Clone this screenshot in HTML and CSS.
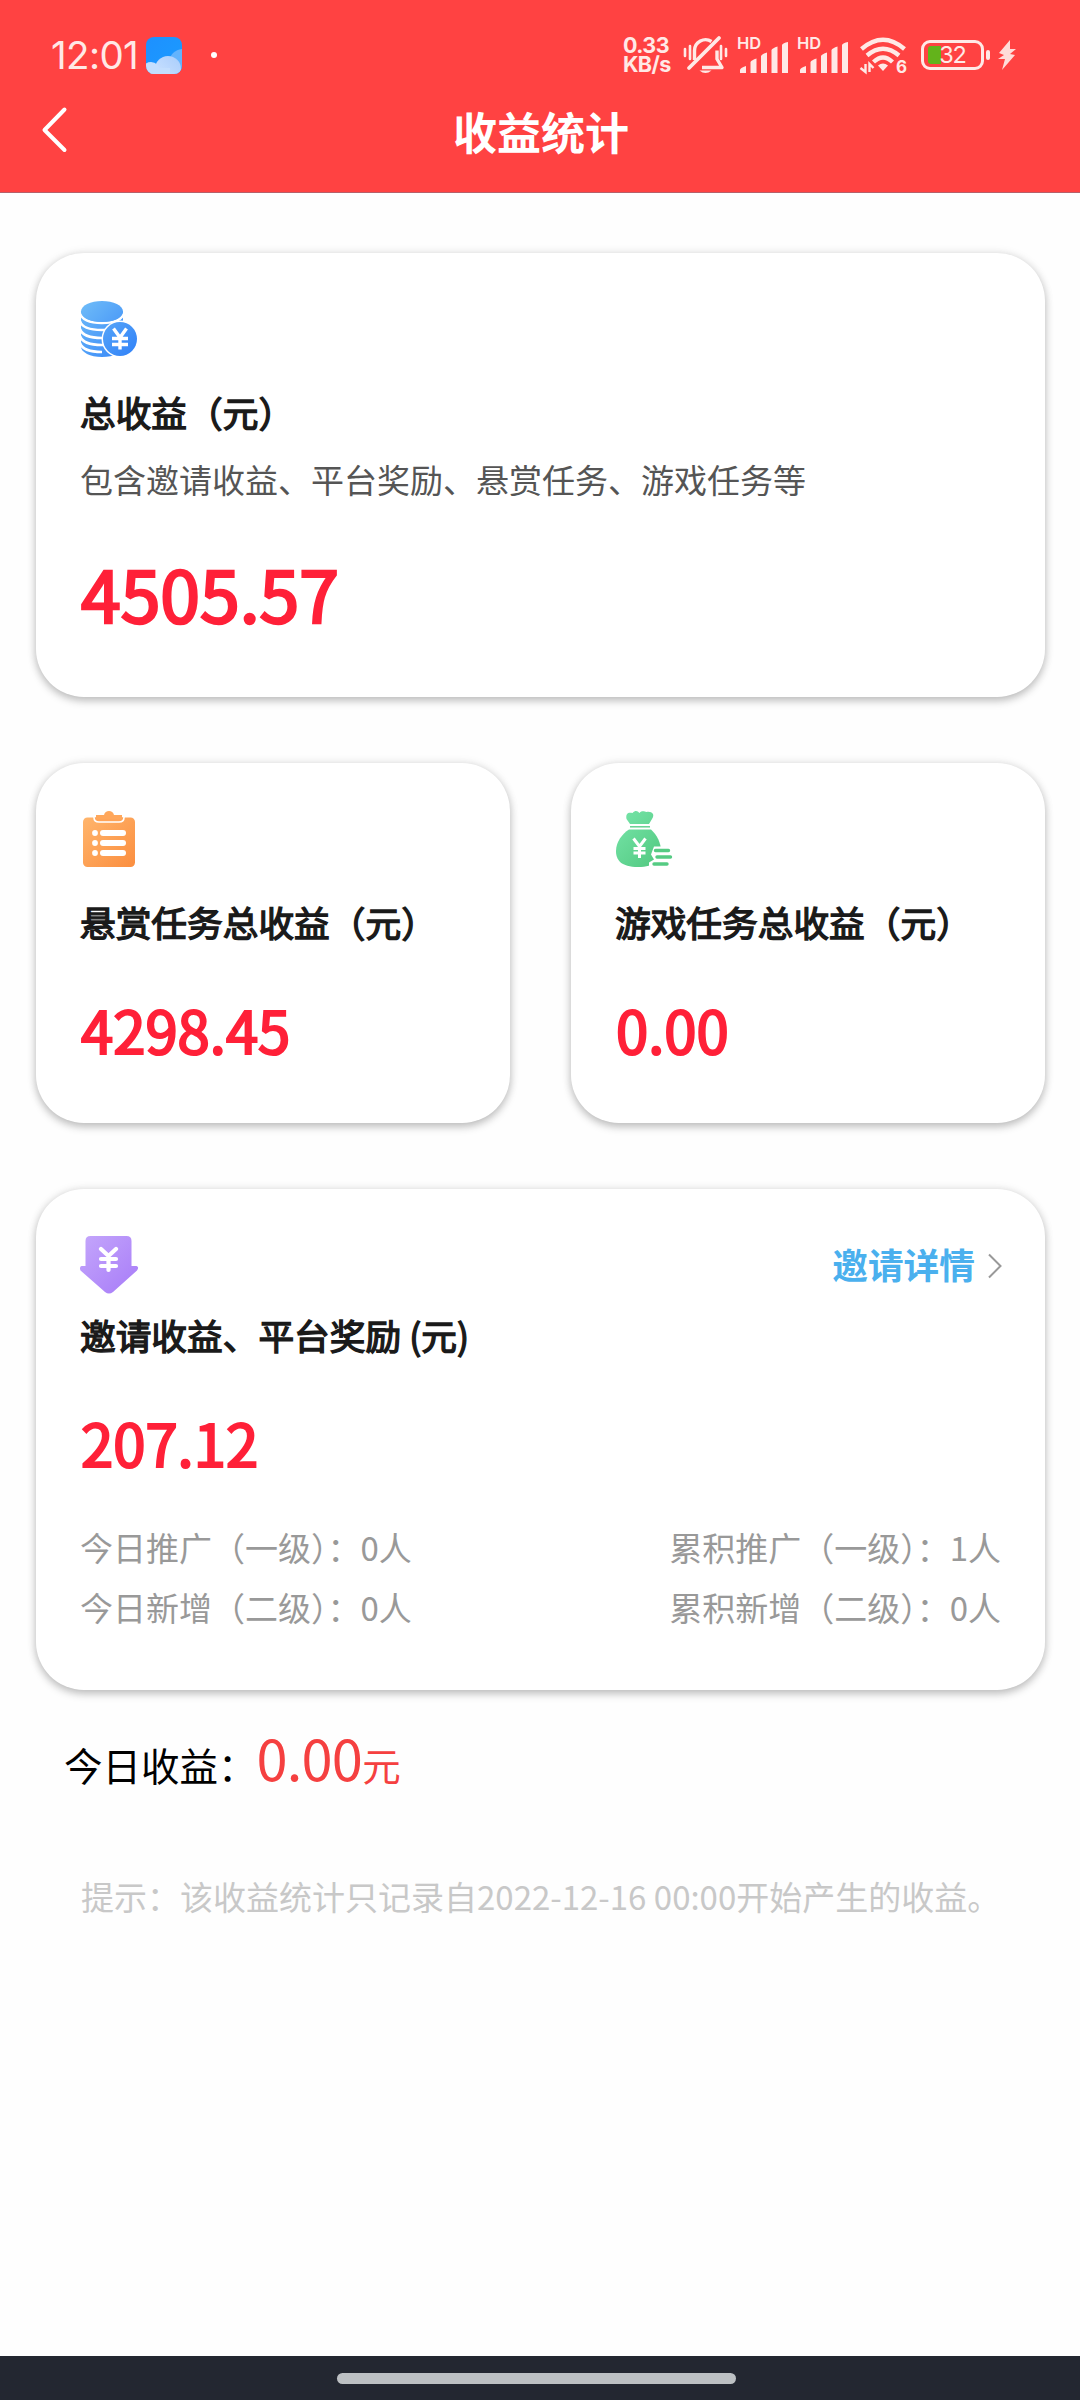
FILE: index.html
```html
<!DOCTYPE html>
<html lang="zh-CN">
<head>
<meta charset="utf-8">
<title>收益统计</title>
<link rel="stylesheet" href="styles.css">
</head>
<body>
<div class="screen">
  <header class="header">
    <div class="status">
      <div class="status-left">
        <span class="clock">12:01</span>
        <svg class="weather" viewBox="0 0 36 37">
          <defs>
            <linearGradient id="sky" x1="0" y1="0" x2="1" y2="1"><stop offset="0" stop-color="#1e90ff"/><stop offset="1" stop-color="#1a9cff"/></linearGradient>
            <linearGradient id="cloud" x1="1" y1="0" x2="0" y2="1"><stop offset="0" stop-color="#a9cdfc"/><stop offset="1" stop-color="#cfe4ff"/></linearGradient>
            <clipPath id="tile"><rect width="36" height="37" rx="8"/></clipPath>
          </defs>
          <g clip-path="url(#tile)">
            <rect width="36" height="37" fill="url(#sky)"/>
            <circle cx="37" cy="26" r="14" fill="#63b3fd"/>
            <circle cx="22" cy="32" r="13" fill="url(#cloud)"/>
            <circle cx="5" cy="34" r="9" fill="#c3defe"/>
            <rect x="4" y="31" width="20" height="8" fill="#c3defe"/>
          </g>
        </svg>
        <span class="dot"></span>
      </div>
      <div class="status-right">
        <span class="speed"><span>0.33</span><span>KB/s</span></span>
        <svg class="bell" viewBox="0 0 45 38" fill="none" stroke="#ffe9e6" stroke-width="3.400">
          <path d="M2 13v7M7 10v13M38 10v13M43 13v7" stroke-width="2.600" stroke-linecap="round"/>
          <path d="M11.500 24V14.500a11 11 0 0 1 17-9M34 14.500V23l5 8.500H19" stroke-linejoin="round"/>
          <path d="M6 32L36 2" stroke-width="3.800" stroke-linecap="round"/>
          <path d="M16.500 34.500h12q-6 5-12 0z" fill="#ffe9e6" stroke="none"/>
        </svg>
        <span class="signal"><span class="hd">HD</span>
          <svg viewBox="0 0 48 31" fill="#ffe9e6"><path d="M0 31v-3q0-2 6-4v7zM10.500 31V20q1-2 6-3.500V31zM21 31V14q1-2 6-3.500V31zM31.500 31V8q1-2 6-3.500V31zM42 31V3q1-2 6-3v31z"/></svg>
        </span>
        <span class="signal"><span class="hd">HD</span>
          <svg viewBox="0 0 48 31" fill="#ffe9e6"><path d="M0 31v-3q0-2 6-4v7zM10.500 31V20q1-2 6-3.500V31zM21 31V14q1-2 6-3.500V31zM31.500 31V8q1-2 6-3.500V31zM42 31V3q1-2 6-3v31z"/></svg>
        </span>
        <span class="wifi">
          <svg viewBox="0 0 46 36" fill="none" stroke="#ffe9e6" stroke-width="4.400">
            <path d="M1.500 12Q23-6.500 44.500 12M7 18.500Q23 5 39 18.500M13.500 25Q23 16 32.500 25"/>
            <path d="M23 34l-5-5.500q5-4 10 0z" fill="#ffe9e6" stroke="none"/>
            <path d="M5.500 27v8l-5-4M9.500 35v-8l4 4" stroke-width="2.400"/>
          </svg>
          <span class="wifi-gen">6</span>
        </span>
        <span class="battery"><span class="charge"></span><span class="percent">32</span></span>
        <span class="nub"></span>
        <svg class="bolt" viewBox="0 0 18 30"><path d="M12 0L1 13l5 2-6 4h7L4 30l13-15-5-1 6-5h-6z" fill="#ffdcd9"/></svg>
      </div>
    </div>
    <div class="navbar">
      <svg class="back" viewBox="0 0 26 46"><path d="M22.500 2.500L2.500 23l20 20" fill="none" stroke="#fff" stroke-width="4" stroke-linecap="round" stroke-linejoin="round"/></svg>
      <h1>收益统计</h1>
    </div>
  </header>

  <main class="content">
    <section class="card total">
      <svg class="icon" viewBox="-1 0 58 58">
        <defs><linearGradient id="blue" gradientUnits="userSpaceOnUse" x1="0" y1="0" x2="56" y2="56"><stop offset="0" stop-color="#70bdf8"/><stop offset="1" stop-color="#2f80f8"/></linearGradient></defs>
        <path d="M0 10v36c0 5 9 10 21 10s21-5 21-10V10z" fill="url(#blue)"/>
        <path d="M-1 12c2 7 11 10 22 10s20-3 22-10M-1 20c2 7 11 9 22 9s20-2 22-9M-1 28c2 6 11 9 22 9s20-3 22-9M-1 35c2 6 11 9 22 9s20-3 22-9M-1 42c2 6 11 9 22 9" fill="none" stroke="#fff" stroke-width="2.600"/>
        <ellipse cx="21" cy="10.500" rx="21" ry="10.500" fill="url(#blue)"/>
        <circle cx="39" cy="38" r="18.500" fill="#fff"/><circle cx="39" cy="38" r="17" fill="url(#blue)"/>
        <path d="M32.500 27.500l6.500 9 6.500-9M39 36v12.500M31 37.500h16M31 43.500h16" fill="none" stroke="#fff" stroke-width="3.400"/>
      </svg>
      <h2>总收益（元）</h2>
      <p class="desc">包含邀请收益、平台奖励、悬赏任务、游戏任务等</p>
      <p class="amount big">4505.57</p>
    </section>

    <div class="pair">
      <section class="card">
        <svg class="icon" viewBox="-1 0 58 58">
          <defs><linearGradient id="orange" x1="0" y1="0" x2="1" y2="1"><stop offset="0" stop-color="#ffb56c"/><stop offset="1" stop-color="#fb8e3f"/></linearGradient></defs>
          <rect x="2" y="6.500" width="52" height="49.500" rx="4.500" fill="url(#orange)"/>
          <path d="M13 5.500h30v1c0 3-2 4.500-5 4.500H18c-3 0-5-1.500-5-4.500z" fill="#ffa458" stroke="#fff" stroke-width="1.600"/>
          <path d="M15 4h8c1-5.500 9-5.500 10 0h8v4H15z" fill="#ffa75b"/>
          <g fill="#fff"><circle cx="14" cy="22" r="2.900"/><circle cx="14" cy="32" r="2.900"/><circle cx="14" cy="42" r="2.900"/><rect x="19" y="19" width="26" height="6" rx="3"/><rect x="19" y="29" width="26" height="6" rx="3"/><rect x="19" y="39" width="26" height="6" rx="3"/></g>
        </svg>
        <h2>悬赏任务总收益（元）</h2>
        <p class="amount">4298.45</p>
      </section>
      <section class="card">
        <svg class="icon" viewBox="-1 0 58 58">
          <defs><linearGradient id="green" gradientUnits="userSpaceOnUse" x1="0" y1="10" x2="50" y2="56"><stop offset="0" stop-color="#74e3a6"/><stop offset="1" stop-color="#4fc67d"/></linearGradient></defs>
          <path d="M14 13L10.500 8c-1-6 2-7 6-6 3-3 5-2 7 0 3-3 5-1 7-1 5-1 9 2 5.500 7l-3 5z" fill="url(#green)"/>
          <path d="M14 15.800h20" stroke="#5bcf88" stroke-width="1.400"/>
          <path d="M13 18.500h22C41 24 45 32 45 40s-6 16-23 16S0 49 0 40s6-17 13-21.500z" fill="url(#green)"/>
          <path d="M17.500 27.500l6 8 6-8M23.500 35v12M17.500 37.500h12M17.500 42h12" fill="none" stroke="#fff" stroke-width="3"/>
          <path d="M38 35.500h19v22H33v-6l5-3-3-5z" fill="#fff"/>
          <path d="M39.500 39.500h13M41 46h13.500M38 53h13" stroke="#55cb83" stroke-width="3.400" stroke-linecap="round"/>
        </svg>
        <h2>游戏任务总收益（元）</h2>
        <p class="amount">0.00</p>
      </section>
    </div>

    <section class="card invite">
      <div class="invite-head">
        <svg class="icon" viewBox="0 0 58 58">
          <defs><linearGradient id="purple" x1="0" y1="0" x2="1" y2="1"><stop offset="0" stop-color="#c4a6fb"/><stop offset="1" stop-color="#a77bf8"/></linearGradient></defs>
          <path d="M10.500 0h36q5 0 5 5v25h5q3 1 .5 4.500L33 56q-4 3-8 0L.5 34.500Q-1 31 1.500 30h4V5q0-5 5-5z" fill="url(#purple)"/>
          <path d="M21 13l7.500 7 7.500-7M28.500 20v14M21 23h15M21 30h15" fill="none" stroke="#fff" stroke-width="4.200" stroke-linecap="round"/>
        </svg>
        <a class="link">邀请详情
          <svg viewBox="0 0 14 26"><path d="M1 1.500L12.500 13 1 24.500" fill="none" stroke="#999" stroke-width="2"/></svg>
        </a>
      </div>
      <h2>邀请收益、平台奖励 (元)</h2>
      <p class="amount">207.12</p>
      <div class="stats">
        <span>今日推广（一级）：0人</span><span>累积推广（一级）：1人</span>
        <span>今日新增（二级）：0人</span><span>累积新增（二级）：0人</span>
      </div>
    </section>

    <p class="today">今日收益：<span class="today-value">0.00</span><span class="unit">元</span></p>
    <p class="hint">提示：该收益统计只记录自2022-12-16 00:00开始产生的收益。</p>
  </main>

  <footer class="gesture"><span></span></footer>
</div>
</body>
</html>
```

FILE: styles.css
```css
* { box-sizing: border-box; }
body, h1, h2, p { margin: 0; }
body {
  width: 1080px;
  background: #fefefe;
  font-family: "Noto Sans CJK SC", sans-serif;
  color: #1a1a1a;
}
svg { display: block; flex: none; overflow: visible; }
.screen { display: flex; flex-direction: column; height: 2400px; }

/* header */
.header { height: 193px; background: #ff4242; border-bottom: 1px solid #b5606a; }
.status {
  display: flex; justify-content: space-between; align-items: center;
  height: 74px; margin-bottom: 18px; padding: 36px 64px 0 51px;
  color: #ffe9e6;
}
.status-left, .status-right { display: flex; align-items: center; height: 38px; }
.clock { width: 95px; font: 400 38.500px/38px Inter, sans-serif; letter-spacing: -.6px; }
.weather { width: 36px; height: 37px; }
.dot { width: 6px; height: 6px; margin-left: 29px; border-radius: 50%; background: #fff; }
.speed {
  display: flex; flex-direction: column; width: 60px;
  font: 700 21.500px/19px Inter, sans-serif; letter-spacing: -.6px;
}
.bell { width: 45px; height: 38px; }
.signal { position: relative; width: 49px; margin-left: 11px; }
.signal svg { width: 48px; height: 31px; margin: 5px 0 0 1px; }
.hd { position: absolute; left: -2px; top: -3px; font: 600 16.500px/18px Inter, sans-serif; }
.wifi { position: relative; width: 46px; margin-left: 12px; }
.wifi svg { width: 46px; height: 36px; }
.wifi-gen { position: absolute; right: -1px; bottom: -3px; padding-left: 1px; background: #ff4242; font: 700 17px/18px Inter, sans-serif; }
.battery {
  position: relative; display: flex; align-items: center; justify-content: center;
  width: 63px; height: 30px; margin-left: 15px; border: 3px solid #ffe9e6; border-radius: 9px;
}
.charge { position: absolute; left: 4px; top: 3px; width: 13px; height: 18px; border-radius: 3px 0 0 3px; background: #63b31b; }
.percent { position: relative; font: 400 23.500px/24px Inter, sans-serif; letter-spacing: -1.200px; }
.nub { width: 4px; height: 10px; margin-left: 2px; border-radius: 2px; background: #ffe9e6; }
.bolt { width: 18px; height: 30px; margin-left: 8px; }
.navbar { display: flex; align-items: center; height: 76px; padding: 0 41px 0 42px; }
.back { width: 26px; height: 46px; }
h1 { flex: 1; margin-right: 25px; padding-top: 2px; text-align: center; font-size: 44px; line-height: 64px; font-weight: 700; color: #fff; }

/* cards */
.content { flex: 1; padding: 60px 35px 0 36px; }
.card {
  height: 360px; padding: 48px 43px 0 44px; border-radius: 48px; background: #fff;
  box-shadow: 0 4px 8px rgba(0, 0, 0, .22), 0 0 10px rgba(0, 0, 0, .1);
}
.total { height: 444px; }
.icon { width: 58px; height: 58px; }
h2 {
  margin-top: 27px; font-size: 35.700px; line-height: 52px; font-weight: 400; white-space: nowrap;
  -webkit-text-stroke: 1.400px currentColor;
}
.desc { margin-top: 17px; font-size: 33px; line-height: 48px; color: #555; }
.amount {
  margin-top: 35px; padding-left: 1px; font-size: 58px; line-height: 92px; color: #ff2038;
  -webkit-text-stroke: 2.200px currentColor;
}
.amount.big { margin-top: 39px; font-size: 71.500px; line-height: 100px; -webkit-text-stroke-width: 2.600px; }
.pair { display: grid; grid-template-columns: 474px 474px; justify-content: space-between; margin: 66px 0; }
.invite { height: 501px; padding-top: 47px; }
.invite-head { display: flex; justify-content: space-between; align-items: flex-start; }
.invite h2 { margin-top: 15px; }
.link { display: flex; align-items: center; gap: 13px; margin-top: 2px; font-size: 35.700px; line-height: 52px; font-weight: 700; color: #4ab0ee; }
.link svg { width: 14px; height: 26px; margin-top: 3px; }
.stats { display: grid; grid-template-columns: auto auto; justify-content: space-between; margin: 29px 1px 0 0; font-size: 33px; line-height: 60px; color: #999; }

.today { margin: 25px 0 0 28px; font-size: 38.500px; line-height: 84px; color: #000; white-space: nowrap; }
.today-value { font-size: 56px; letter-spacing: -.8px; color: #f54040; }
.unit { color: #f54040; }
.hint { margin: 66px 0 0 45px; font-size: 33px; line-height: 48px; color: #c8c8c8; white-space: nowrap; }

.gesture { display: flex; justify-content: center; height: 44px; padding: 17px 7px 0 0; background: #232731; }
.gesture span { width: 399px; height: 11px; border-radius: 6px; background: #bcc0c3; }
```
